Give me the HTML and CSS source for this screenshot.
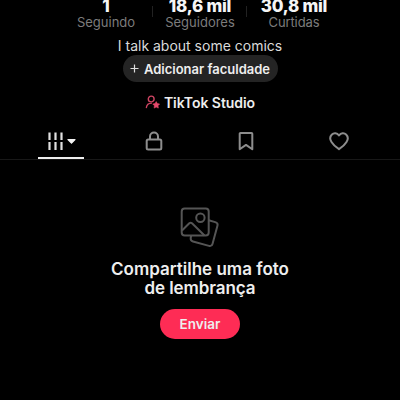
FILE: index.html
```html
<!DOCTYPE html>
<html lang="pt-BR">
<head>
<meta charset="utf-8">
<title>Perfil</title>
<link rel="stylesheet" href="styles.css">
</head>
<body>
<main class="profile">
  <section class="stats">
    <div class="stat"><strong>1</strong><span>Seguindo</span></div>
    <div class="stat"><strong>18,6 mil</strong><span>Seguidores</span></div>
    <div class="stat"><strong>30,8 mil</strong><span class="likes">Curtidas</span></div>
  </section>
  <p class="bio">I talk about some comics</p>
  <button class="school">
    <svg width="9" height="9" viewBox="0 0 9 9"><path d="M4.500 .5v8M.5 4.500h8" stroke="#ddd" stroke-width="1.200"/></svg>
    <span>Adicionar faculdade</span>
  </button>
  <div class="studio">
    <svg width="16" height="14" viewBox="0 0 16 14"><circle cx="6.200" cy="4" r="2.900" fill="none" stroke="#cf4563" stroke-width="1.400"/><path d="M1.400 12.500C1.700 9.700 3.500 8.200 6.500 8.100" fill="none" stroke="#cf4563" stroke-width="1.400" stroke-linecap="round"/><path d="m11.200 6.600 1.100 2 2.300.4-1.600 1.700.3 2.400-2.100-1-2.100 1 .3-2.400L7.800 9l2.300-.4z" fill="#e5496c" stroke="#e5496c" stroke-width=".6" stroke-linejoin="round"/></svg>
    <span>TikTok Studio</span>
  </div>
  <nav class="tabs">
    <a class="tab active">
      <svg width="30" height="20" viewBox="0 0 30 20"><path d="M3.500 1.500v7.500M9.500 1.500v7.500M15.500 1.500v7.500M3.500 11v8M9.500 11v8M15.500 11v8" stroke="#e0e0e0" stroke-width="2.200"/><path d="M22 8.500h7l-3.500 3.700z" fill="#f4f4f4" stroke="#f4f4f4" stroke-width="1.200" stroke-linejoin="round"/></svg>
    </a>
    <a class="tab"><svg width="18" height="20" viewBox="0 0 18 20"><rect x="1.700" y="8.400" width="14.600" height="10.200" rx="1.500"/><path d="M5 8V5.500a4 4 0 0 1 8 0V8"/></svg></a>
    <a class="tab"><svg width="18" height="20" viewBox="0 0 18 20"><path d="M3.500 2h11a.8.8 0 0 1 .8.8v15.500L9 13.900l-6.300 4.400V2.800a.8.8 0 0 1 .8-.8z"/></svg></a>
    <a class="tab"><svg width="20" height="20" viewBox="0 0 20 20"><path d="M10 4.500C8 1.700 4.800 1.500 2.900 3.500c-2 2-1.900 5.200-.4 7.500C4.200 13.800 7 16.300 10 18.200c3-1.900 5.800-4.400 7.500-7.200C19 8.700 19.100 5.500 17.100 3.500 15.200 1.500 12 1.700 10 4.500z"/></svg></a>
  </nav>
  <section class="memory">
    <svg width="40" height="42" viewBox="0 0 40 42"><g fill="none" stroke="#555" stroke-width="2" stroke-linejoin="round"><rect x="1.700" y="2.500" width="27" height="27" rx="3"/><circle cx="20.400" cy="11.700" r="4.200"/><path d="m2 24.500 7.300-7.300q1.300-1 2.700 0L24.500 29.500M28.700 14.300l6.500 1.800q3 .8 2.300 3.500l-5 18.300q-.8 2.700-3.500 2L13 35.500q-2.700-.8-2.300-3.500l.5-2.500"/></g></svg>
    <h1>Compartilhe uma foto<br><span class="line-two">de lembrança</span></h1>
    <button class="send">Enviar</button>
  </section>
</main>
</body>
</html>
```
FILE: styles.css
```css
* { box-sizing: border-box; }
body {
  margin: 0;
  background: #000;
  color: #eee;
  font-family: Inter, "Liberation Sans", sans-serif;
}
svg { display: block; flex: none; }
button { border: 0; font-family: inherit; color: inherit; }
.profile {
  height: 400px;
  overflow: hidden;
  display: flex;
  flex-direction: column;
  align-items: center;
}
.stats {
  display: grid;
  grid-template-columns: repeat(3, 94px);
  height: 31px;
  flex: none;
}
.stat {
  display: flex;
  flex-direction: column;
  align-items: center;
  white-space: nowrap;
  background: linear-gradient(#222, #222) right 6px / 1px 11px no-repeat;
}
.stat:last-child { background: none; }
.stat strong { font-size: 17px; font-weight: 800; line-height: 13px; letter-spacing: -.25px; color: #f5f5f5; }
.stat span { margin-top: 1px; font-size: 13px; line-height: 17px; color: #7c7c7c; }
.stat .likes { letter-spacing: -.1px; }
.bio { margin: 6px 0 0; font-size: 14px; line-height: 18px; color: #dadada; white-space: nowrap; }
.school {
  width: 155px;
  height: 27px;
  padding: 0;
  border-radius: 14px;
  background: #242424;
  display: flex;
  align-items: center;
  justify-content: center;
  gap: 5px;
  font-size: 13px;
  font-weight: 600;
  white-space: nowrap;
  flex: none;
}
.studio {
  height: 20px;
  margin-top: 10px;
  display: flex;
  align-items: center;
  gap: 3px;
  font-size: 14px;
  font-weight: 600;
  letter-spacing: -.05px;
}
.tabs {
  width: 100%;
  height: 37px;
  margin-top: 11px;
  padding: 0 15px;
  display: grid;
  grid-template-columns: repeat(4, 1fr);
  border-bottom: 1px solid #181818;
  flex: none;
}
.tab { display: flex; align-items: center; justify-content: center; height: 36px; padding-bottom: 1px; }
.tab svg { fill: none; stroke: #8d8d8d; stroke-width: 2; stroke-linejoin: round; }
.tab.active { background: linear-gradient(#eee, #eee) center bottom / 46px 2px no-repeat; }
.tab.active svg { stroke: none; }
.memory { display: flex; flex-direction: column; align-items: center; padding-top: 46px; }
.memory h1 { margin: 12px 0 0; font-size: 17px; line-height: 19px; font-weight: 600; text-align: center; white-space: nowrap; }
.line-two { letter-spacing: -.1px; }
.send {
  width: 80px;
  height: 30px;
  margin-top: 11px;
  padding: 0;
  border-radius: 15px;
  background: #fe2c55;
  font-size: 13.500px;
  font-weight: 600;
}
```
